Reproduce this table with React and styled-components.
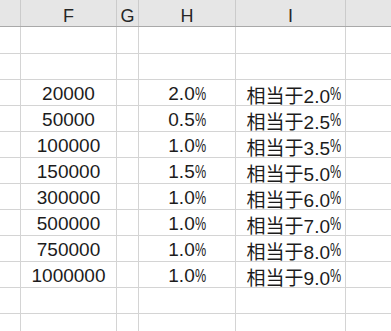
import React from 'react';
import styled, { createGlobalStyle } from 'styled-components';

const GlobalStyle = createGlobalStyle`
  html, body {
    margin: 0;
    padding: 0;
    background: #fff;
  }
  body {
    width: 391px;
    height: 331px;
    overflow: hidden;
    font-family: "Liberation Sans", "Noto Sans CJK SC", sans-serif;
    color: #1c1c1c;
  }
`;

const COLUMNS = '21px 96px 22px 97px 110px 100px';

const Sheet = styled.div`
  display: flex;
  flex-direction: column;
  width: 391px;
  height: 331px;
  overflow: hidden;
`;

const HeaderRow = styled.div`
  display: grid;
  grid-template-columns: ${COLUMNS};
  height: 27px;
  background: #e6e6e6;
  border-bottom: 1px solid #a9a9a9;
  box-sizing: border-box;
`;

const HeaderCell = styled.div`
  display: flex;
  align-items: center;
  justify-content: center;
  padding-top: 6px;
  box-sizing: border-box;
  border-right: 1px solid ${({ $last }) => ($last ? 'transparent' : '#cbcbcb')};
  font-size: 18px;
  color: #262626;
  white-space: nowrap;
  overflow: hidden;
`;

const Row = styled.div`
  display: grid;
  grid-template-columns: ${COLUMNS};
  height: ${({ $h }) => $h || 26}px;
  flex-shrink: 0;
  border-bottom: 1px solid #d4d4d4;
  box-sizing: border-box;
`;

const Cell = styled.div`
  display: flex;
  align-items: center;
  justify-content: ${({ $align }) => $align || 'center'};
  padding: 3px ${({ $pr }) => $pr || 0}px 0 0;
  box-sizing: border-box;
  border-right: 1px solid #d4d4d4;
  font-size: 19px;
  white-space: nowrap;
  overflow: hidden;
`;

const Pct = styled.span`
  display: inline-block;
  width: 11px;
  transform: scaleX(0.66);
  transform-origin: left center;
`;

const data = [
  ['20000', '2.0', '2.0'],
  ['50000', '0.5', '2.5'],
  ['100000', '1.0', '3.5'],
  ['150000', '1.5', '5.0'],
  ['300000', '1.0', '6.0'],
  ['500000', '1.0', '7.0'],
  ['750000', '1.0', '8.0'],
  ['1000000', '1.0', '9.0'],
];

const EmptyRow = ({ h }) => (
  <Row $h={h}>
    <Cell />
    <Cell />
    <Cell />
    <Cell />
    <Cell />
    <Cell />
  </Row>
);

const App = () => (
  <>
    <GlobalStyle />
    <Sheet>
      <HeaderRow>
        <HeaderCell />
        <HeaderCell>F</HeaderCell>
        <HeaderCell>G</HeaderCell>
        <HeaderCell>H</HeaderCell>
        <HeaderCell>I</HeaderCell>
        <HeaderCell $last>
          <span style={{ marginLeft: 86 }}>J</span>
        </HeaderCell>
      </HeaderRow>
      <EmptyRow h={27} />
      <EmptyRow />
      {data.map(([amount, rate, total]) => (
        <Row key={amount}>
          <Cell />
          <Cell>{amount}</Cell>
          <Cell />
          <Cell>
            {rate}
            <Pct>%</Pct>
          </Cell>
          <Cell $align="flex-end" $pr={4}>
            相当于{total}
            <Pct>%</Pct>
          </Cell>
          <Cell />
        </Row>
      ))}
      <EmptyRow />
      <EmptyRow />
    </Sheet>
  </>
);

export default App;
